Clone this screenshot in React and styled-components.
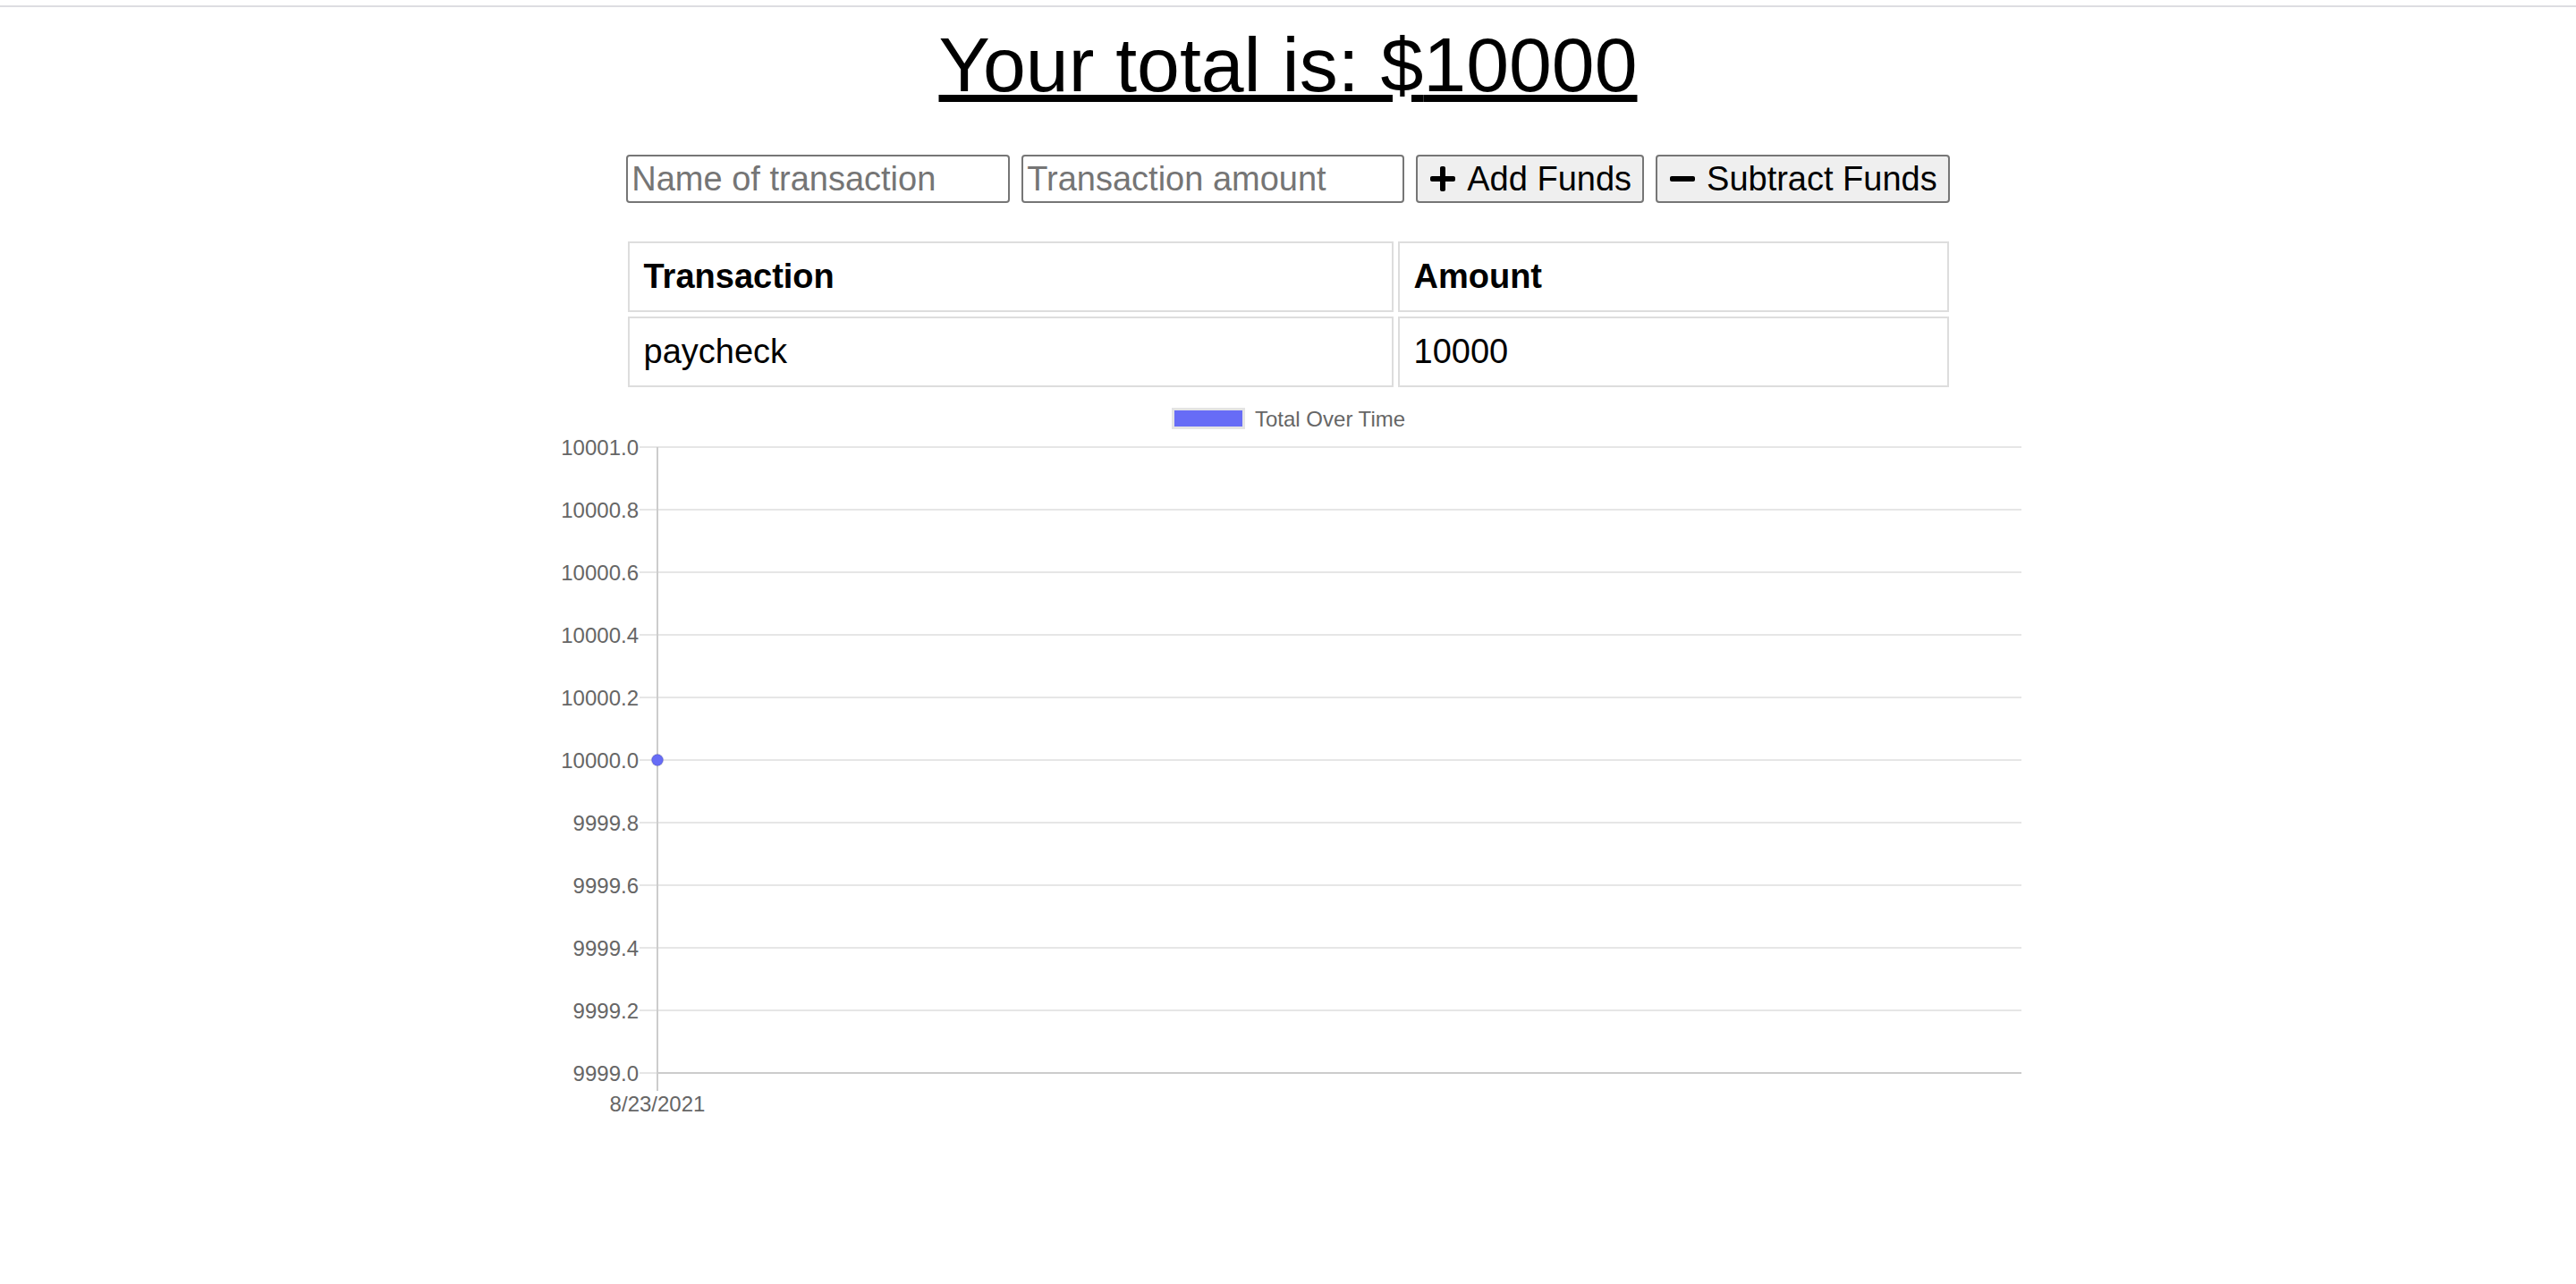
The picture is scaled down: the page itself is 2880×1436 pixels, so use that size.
import React from "react";
import styled, { createGlobalStyle } from "styled-components";
import { FaPlus, FaMinus } from "react-icons/fa";

const transactions = [{ name: "paycheck", value: 10000 }];

const yTicks = [
  "10001.0",
  "10000.8",
  "10000.6",
  "10000.4",
  "10000.2",
  "10000.0",
  "9999.8",
  "9999.6",
  "9999.4",
  "9999.2",
  "9999.0",
];

const CHART_W = 1640;
const AXIS_X = 115;
const TOP_Y = 61;
const STEP = 70;

const TotalChart = () => {
  const bottom = TOP_Y + STEP * (yTicks.length - 1);
  return (
    <ChartSvg width={CHART_W} height={830} viewBox={`0 0 ${CHART_W} 830`}>
      <rect x={691.5} y={18.5} width={79} height={21} fill="#676cf6" stroke="#e4e4e4" strokeWidth={3} />
      <text x={783} y={37.5} className="legend">
        Total Over Time
      </text>

      {yTicks.map((label, i) => {
        const y = TOP_Y + STEP * i;
        return (
          <g key={label}>
            <line x1={95} x2={CHART_W} y1={y} y2={y} stroke="#e6e6e6" strokeWidth={2} />
            <text x={94} y={y + 8.5} textAnchor="end">
              {label}
            </text>
          </g>
        );
      })}

      <line x1={AXIS_X} x2={CHART_W} y1={bottom} y2={bottom} stroke="#cccccc" strokeWidth={2} />
      <line x1={AXIS_X} x2={AXIS_X} y1={TOP_Y} y2={bottom + 20} stroke="#cccccc" strokeWidth={2} />

      <text x={AXIS_X} y={804} textAnchor="middle">
        8/23/2021
      </text>

      <circle cx={AXIS_X} cy={TOP_Y + STEP * 5} r={6.5} fill="#676cf6" stroke="rgba(0,0,0,0.1)" strokeWidth={1.5} />
    </ChartSvg>
  );
};

const App = () => {
  const total = transactions.reduce((sum, t) => sum + t.value, 0);

  return (
    <>
      <GlobalStyle />
      <Page>
        <TopRule />
        <Title>Your total is: ${total}</Title>
        <Form>
          <Input type="text" placeholder="Name of transaction" $w={429} />
          <Input type="number" placeholder="Transaction amount" $w={428} />
          <ActionButton>
            <FaPlus size={32} />
            Add Funds
          </ActionButton>
          <ActionButton>
            <FaMinus size={32} />
            Subtract Funds
          </ActionButton>
        </Form>
        <Table>
          <thead>
            <tr>
              <HeadCell $w={820}>Transaction</HeadCell>
              <HeadCell>Amount</HeadCell>
            </tr>
          </thead>
          <tbody>
            {transactions.map((t) => (
              <tr key={t.name}>
                <Cell>{t.name}</Cell>
                <Cell>{t.value}</Cell>
              </tr>
            ))}
          </tbody>
        </Table>
        <TotalChart />
      </Page>
    </>
  );
};

export default App;

const GlobalStyle = createGlobalStyle`
  html, body {
    margin: 0;
    padding: 0;
    background: #ffffff;
  }
  body {
    font-family: "Liberation Sans", Arial, Helvetica, sans-serif;
    color: #000000;
  }
`;

const Page = styled.div`
  padding-top: 6px;
  min-height: 1430px;
`;

const TopRule = styled.div`
  height: 2px;
  background: #dddde1;
`;

const Title = styled.h1`
  margin: 15px 0 0;
  font-size: 86px;
  font-weight: 400;
  line-height: 99px;
  text-align: center;
  text-decoration: underline;
  text-decoration-thickness: 8px;
  text-underline-offset: 4px;
`;

const Form = styled.div`
  display: flex;
  justify-content: center;
  gap: 13px;
  margin-top: 51px;
`;

const Input = styled.input`
  width: ${(p) => p.$w}px;
  height: 54px;
  box-sizing: border-box;
  margin: 0;
  padding: 0 4px;
  border: 2px solid #767676;
  border-radius: 4px;
  font-family: inherit;
  font-size: 38px;
  color: #000;
  background: #fff;
  outline: none;
  -moz-appearance: textfield;
  &::placeholder {
    color: #757575;
  }
  &::-webkit-outer-spin-button,
  &::-webkit-inner-spin-button {
    -webkit-appearance: none;
    margin: 0;
  }
`;

const ActionButton = styled.button`
  height: 54px;
  box-sizing: border-box;
  display: inline-flex;
  align-items: center;
  gap: 11px;
  margin: 0;
  padding: 0 12px;
  border: 2px solid #767676;
  border-radius: 4px;
  background: #efefef;
  font-family: inherit;
  font-size: 38px;
  color: #000;
  cursor: pointer;
  svg {
    flex: none;
  }
`;

const Table = styled.table`
  width: 1487px;
  margin: 38px auto 0;
  border-collapse: separate;
  border-spacing: 5px;
`;

const Cell = styled.td`
  border: 2px solid #dddddd;
  padding: 16px;
  font-size: 38px;
  text-align: left;
  ${(p) => (p.$w ? `width: ${p.$w}px;` : "")}
`;

const HeadCell = styled(Cell).attrs({ as: "th" })`
  font-weight: 700;
`;

const ChartSvg = styled.svg`
  display: block;
  margin: 1px auto 0;
  font-family: "Liberation Sans", Arial, Helvetica, sans-serif;
  text {
    font-size: 24px;
    fill: #666666;
  }
`;
